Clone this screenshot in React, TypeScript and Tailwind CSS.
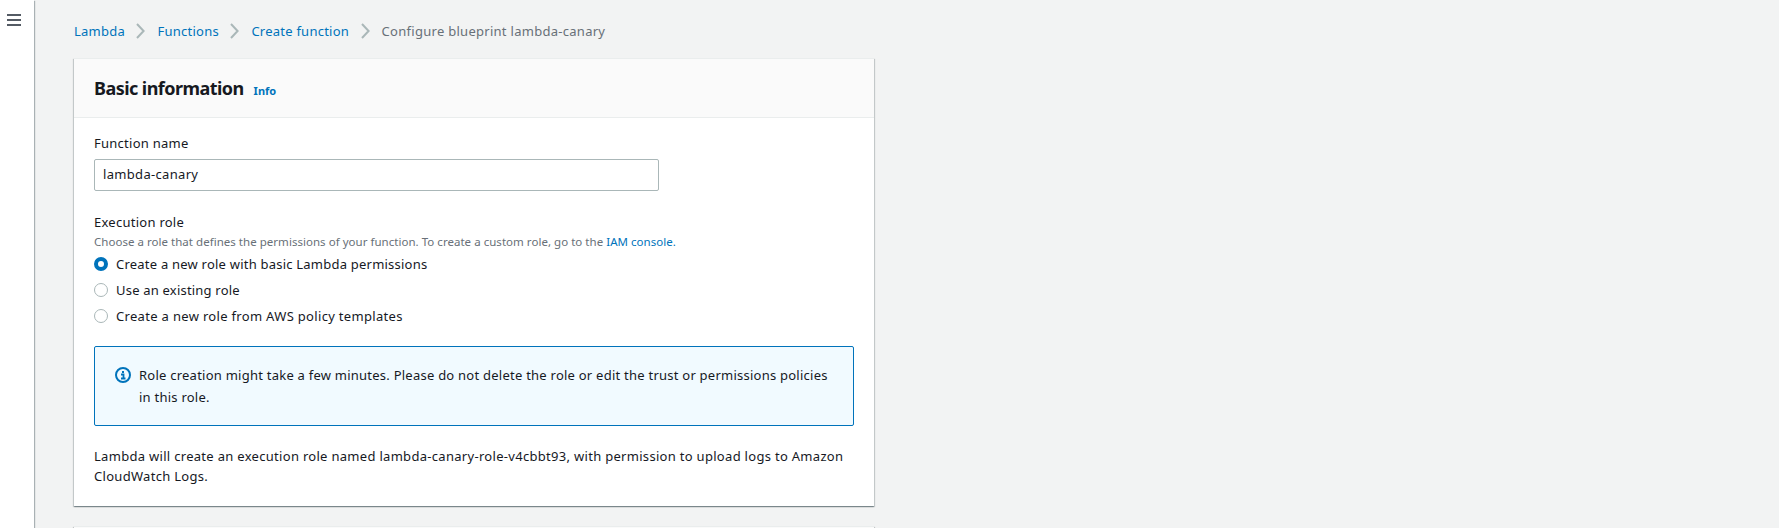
import React from "react";

const Chevron = () => (
  <svg className="mr-[12px] ml-[11.5px] shrink-0" width="9" height="16" viewBox="0 0 9 16" fill="none" stroke="#aab7b8" strokeWidth="2">
    <path d="M1 1l6.6 7L1 15" />
  </svg>
);

const InfoIcon = () => (
  <svg className="mt-[3px] shrink-0" width="16" height="16" viewBox="0 0 16 16" fill="none" stroke="#0073bb" strokeWidth="2">
    <circle cx="8" cy="8" r="7" />
    <path d="M6 7.5h2.5V12M6 11.5h4.5M7 5h2" strokeWidth="1.8" />
  </svg>
);

const Radio = ({ checked, label, tracking }: { checked?: boolean; label: string; tracking: string }) => (
  <label className="flex h-[26px] items-center gap-2">
    <span
      className={`size-[14px] shrink-0 rounded-full bg-white ${checked ? "border-[4.5px] border-[#0073bb]" : "border border-[#aab7b8]"}`}
    />
    <span className={`pb-px whitespace-nowrap ${tracking}`}>{label}</span>
  </label>
);

const cardShadow =
  "border-t border-[#eaeded] shadow-[0_1px_1px_0_rgba(0,28,36,0.3),1px_1px_1px_0_rgba(0,28,36,0.15),-1px_1px_1px_0_rgba(0,28,36,0.15)]";

export default function App() {
  return (
    <div className="flex h-[528px] overflow-hidden bg-[#f2f3f3] font-['Noto_Sans',sans-serif] text-[13px] leading-[22px] tracking-[0.26px] text-[#16191f]">
      <aside className="w-[34px] shrink-0 bg-white pt-3.5 pl-[7px] shadow-[1px_1px_1px_0_rgba(0,28,36,0.3)]">
        <svg width="14" height="12" viewBox="0 0 14 12" stroke="#545b64" strokeWidth="2">
          <path d="M0 1h14M0 6h14M0 11h14" />
        </svg>
      </aside>
      <main className="ml-10 w-[800px] shrink-0 pt-5">
        <nav className="flex h-[22px] items-center tracking-[0.24px] whitespace-nowrap text-[#0073bb]">
          <a>Lambda</a>
          <Chevron />
          <a>Functions</a>
          <Chevron />
          <a>Create function</a>
          <Chevron />
          <span className="tracking-[0.28px] text-[#687078]">Configure blueprint lambda-canary</span>
        </nav>
        <section className={`mt-4 h-[448px] bg-white ${cardShadow}`}>
          <header className="flex h-[59px] items-baseline gap-[10px] border-b border-[#eaeded] bg-[#fafafa] px-5 pt-[18px]">
            <h2 className="text-[18px] font-bold tracking-[-0.55px]">Basic information</h2>
            <a className="text-[11px] font-bold tracking-normal text-[#0073bb]">Info</a>
          </header>
          <div className="px-5 pt-[15px]">
            <div className="-mt-px">Function name</div>
            <input
              className="mt-[5px] block h-8 w-[565px] rounded-[2px] border border-[#aab7b8] bg-white px-2 pb-0.5 tracking-[0.32px] outline-none"
              defaultValue="lambda-canary"
            />
            <div className="mt-5">Execution role</div>
            <div className="text-[11.5px] leading-[18px] tracking-[0.03px] whitespace-nowrap text-[#687078]">
              Choose a role that defines the permissions of your function. To create a custom role, go to the{" "}
              <a className="text-[#0073bb]">IAM console.</a>
            </div>
            <Radio checked label="Create a new role with basic Lambda permissions" tracking="tracking-[0.22px]" />
            <Radio label="Use an existing role" tracking="tracking-[0.2px]" />
            <Radio label="Create a new role from AWS policy templates" tracking="tracking-[0.32px]" />
            <div className="mt-[17px] flex h-20 gap-2 rounded-[2px] border border-[#0073bb] bg-[#f1faff] pt-[17px] pl-5">
              <InfoIcon />
              <p className="tracking-[0.24px] whitespace-nowrap">
                Role creation might take a few minutes. Please do not delete the role or edit the trust or permissions policies
                <br />
                in this role.
              </p>
            </div>
            <p className="mt-5 leading-5 tracking-[0.3px] whitespace-nowrap">
              Lambda will create an execution role named lambda-canary-role-v4cbbt93, with permission to upload logs to Amazon
              <br />
              CloudWatch Logs.
            </p>
          </div>
        </section>
        <section className={`mt-5 h-10 bg-[#fafafa] ${cardShadow}`} />
      </main>
    </div>
  );
}
